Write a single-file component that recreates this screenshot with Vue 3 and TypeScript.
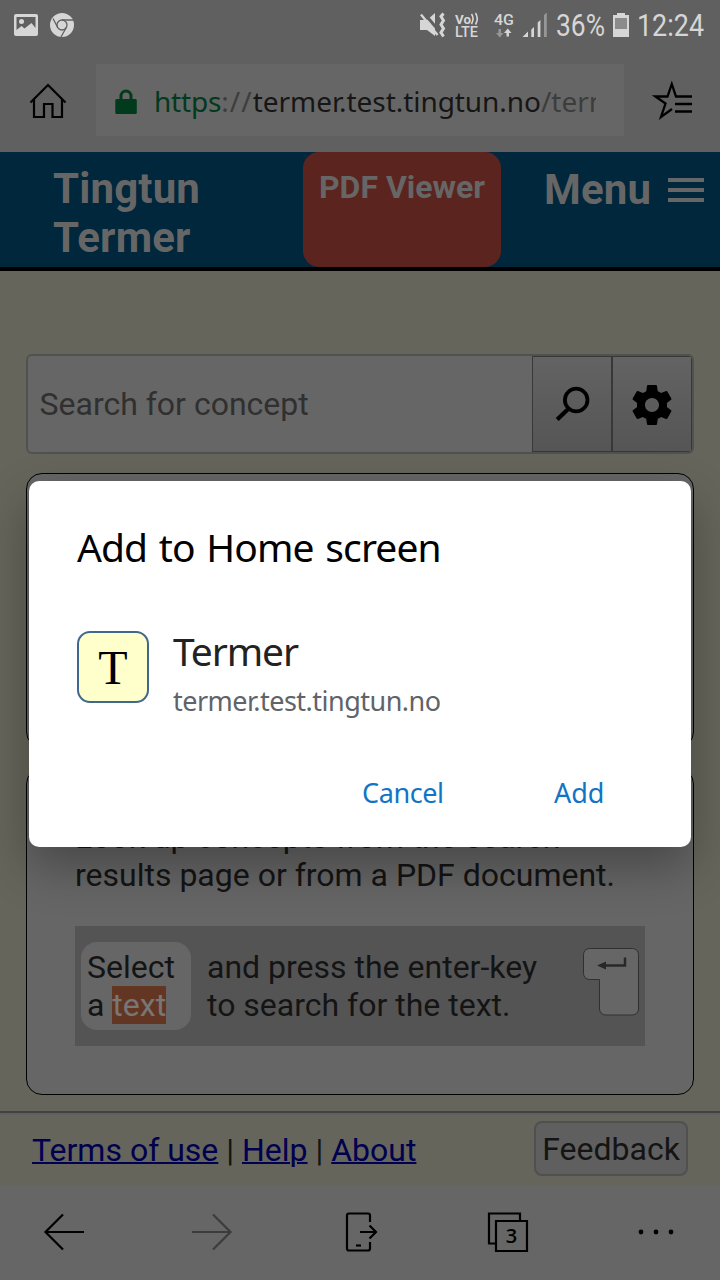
<script setup lang="ts">
const links: string[] = ['Terms of use', 'Help', 'About']
</script>

<template>
  <div class="screen">
    <div class="status">
      <svg width="320" height="50" viewBox="0 0 320 50" class="notif">
        <path fill="#d6d6d6" fill-rule="evenodd" d="M16 14h20a2 2 0 0 1 2 2v18a2 2 0 0 1-2 2H16a2 2 0 0 1-2-2V16a2 2 0 0 1 2-2zM16.500 17v13l5-4 3 2.500 7-5.500 4 5V17z" />
        <circle cx="21.500" cy="21.500" r="2.500" fill="#d6d6d6" />
        <circle cx="62" cy="25" r="12" fill="#d6d6d6" />
        <g fill="none" stroke="#606060" stroke-width="1.300">
          <circle cx="62" cy="25" r="5" />
          <path d="M62 20h11M57.700 27.500L53 18.500M66.300 27.500L61 37" />
        </g>
      </svg>
      <svg width="320" height="50" viewBox="400 0 320 50">
        <path fill="#d6d6d6" d="M420 20h7l8-7v23l-8-6h-7z" />
        <path stroke="#606060" stroke-width="3" d="M423 12l17 20" />
        <path stroke="#d6d6d6" stroke-width="2.400" d="M421 14.500l16.500 20.500" />
        <path fill="none" stroke="#d6d6d6" stroke-width="3" d="M443.500 13.500l-2.500 3 2.500 4-2.500 4 2.500 4-2.500 4 2.500 4" />
        <g fill="#d6d6d6" font-family="Roboto, sans-serif" font-weight="500">
          <text x="455" y="23.500" font-size="13" font-weight="700" textLength="16" lengthAdjust="spacingAndGlyphs">Vo</text>
          <text x="455" y="37" font-size="14" textLength="23" lengthAdjust="spacingAndGlyphs">LTE</text>
          <text x="494" y="25" font-size="15" textLength="20" lengthAdjust="spacingAndGlyphs">4G</text>
        </g>
        <path fill="none" stroke="#d6d6d6" stroke-width="1.600" d="M471.500 14q3 4.500 0 10M475.500 13q3.500 5.500 0 11.500" />
        <path fill="#969696" d="M498.500 29h2.500v4h2.500l-3.700 4.500-3.800-4.500h2.500z" />
        <path fill="#d6d6d6" d="M506.500 36.500h2.500V33h2.500l-3.700-4.500-3.800 4.500h2.500z" />
        <path fill="#d6d6d6" d="M522.500 37l5.500-5.500V37zM531.300 29.500l2.700-2.500v10h-2.700zM537.700 22.500l2.700-2.500v17h-2.700z" />
        <path fill="#969696" d="M544 15l2.800-2.500V37H544z" />
        <g fill="#d6d6d6" font-family="Roboto, sans-serif" font-size="31">
          <text x="556" y="36" textLength="49" lengthAdjust="spacingAndGlyphs">36%</text>
          <text x="637" y="36" textLength="67" lengthAdjust="spacingAndGlyphs">12:24</text>
        </g>
        <path fill="#d6d6d6" d="M617 13h8v2h4v22h-16V15h4z" />
        <path fill="#8b8b8b" d="M615 18h12v11h-12z" />
      </svg>
    </div>

    <div class="toolbar">
      <svg class="home" width="40" height="40" viewBox="28 81 40 40" fill="none" stroke="#000" stroke-width="2.200">
        <path d="M30.500 102.500L48 85l17.500 17.500M34 99.500V117h10v-13h8.500v13H62V99.500" />
      </svg>
      <div class="url">
        <svg width="22" height="26" viewBox="0 0 22 26">
          <path d="M6 11V7a5 5 0 0 1 10 0v4" fill="none" stroke="#023a1e" stroke-width="3" />
          <rect x="0.300" y="10" width="21.500" height="15" rx="1.500" fill="#023a1e" />
        </svg>
        <div class="address"><span class="secure">https</span><span class="dim sep">://</span>termer.test.tingtun.no<span class="dim">/term</span></div>
      </div>
      <svg class="fav" width="42" height="42" viewBox="652 80 42 42" fill="none" stroke="#000" stroke-width="2.300">
        <path d="M692 96.500H676L671.800 84L667.500 96.500H655.500L665.500 103.500L661 117L672 109M675 104h17M675 111.500h17" />
      </svg>
    </div>

    <header class="head">
      <div class="brand">Tingtun<br />Termer</div>
      <div class="pdf">PDF Viewer</div>
      <div class="menu">
        <span>Menu</span>
        <svg width="36" height="24" viewBox="0 0 36 24"><path fill="#666" d="M0 0h36v4H0zM0 10h36v4H0zM0 20h36v4H0z" /></svg>
      </div>
    </header>

    <main class="content">
      <div class="search">
        <div class="field">Search for concept</div>
        <div class="btn">
          <svg width="40" height="40" viewBox="0.800 -1 40 40" fill="none" stroke="#000">
            <circle cx="25" cy="15" r="11.300" stroke-width="3.800" />
            <path d="M16.500 24.500L6 34.500" stroke-width="4.300" />
          </svg>
        </div>
        <div class="btn">
          <svg width="48" height="48" viewBox="0 -0.500 24 24">
            <path d="M19.430 12.980c.04-.32.07-.64.07-.98s-.03-.66-.07-.98l2.110-1.650c.19-.15.24-.42.12-.64l-2-3.460c-.12-.22-.39-.3-.61-.22l-2.490 1c-.52-.4-1.080-.73-1.690-.98l-.38-2.650C14.460 2.180 14.250 2 14 2h-4c-.25 0-.46.18-.49.42l-.38 2.650c-.61.25-1.170.59-1.690.98l-2.490-1c-.23-.09-.49 0-.61.22l-2 3.460c-.13.22-.07.49.12.64l2.110 1.650c-.04.32-.07.65-.07.98s.03.66.07.98l-2.110 1.650c-.19.15-.24.42-.12.64l2 3.460c.12.22.39.3.61.22l2.490-1c.52.4 1.080.73 1.690.98l.38 2.650c.03.24.24.42.49.42h4c.25 0 .46-.18.49-.42l.38-2.650c.61-.25 1.170-.59 1.690-.98l2.490 1c.23.09.49 0 .61-.22l2-3.460c.12-.22.07-.49-.12-.64l-2.110-1.650zM12 15.500c-1.930 0-3.500-1.570-3.500-3.500s1.570-3.500 3.500-3.500 3.500 1.570 3.500 3.500-1.570 3.500-3.500 3.500z" />
          </svg>
        </div>
      </div>
      <section class="card first"></section>
      <section class="card second">
        <p>Look up concepts from the search<br />results page or from a PDF document.</p>
        <div class="hint">
          <div class="select">Select<br />a <mark>text</mark></div>
          <div class="press">and press the enter-key<br />to search for the text.</div>
          <svg width="58" height="70" viewBox="-0.500 0 58 70">
            <path d="M7 1.500H50a6 6 0 0 1 6 6V62a6 6 0 0 1-6 6H23a6 6 0 0 1-6-6V32.500H7a6 6 0 0 1-6-6V7.500a6 6 0 0 1 6-6z" fill="#666" stroke="#303030" />
            <path d="M42.500 10.500v8H21" fill="none" stroke="#28282c" stroke-width="2.500" />
            <path d="M14.500 18.500l9-4v8z" fill="#28282c" />
          </svg>
        </div>
      </section>
    </main>

    <footer class="foot">
      <nav>
        <template v-for="(link, i) in links" :key="link"><template v-if="i"> | </template><a>{{ link }}</a></template>
      </nav>
      <div class="feedback">Feedback</div>
    </footer>

    <div class="bottom">
      <svg width="720" height="94" viewBox="0 1186 720 94" fill="none" stroke="#000" stroke-width="2.200">
        <path d="M84 1232H46M63 1214.500L45.500 1232L63 1249.500" />
        <path stroke="#3c3c3c" d="M192 1232h38M213 1214.500L230.500 1232L213 1249.500" />
        <path d="M370 1222v-6.500q0-2-2-2h-19q-2 0-2 2v33q0 2 2 2h19q2 0 2-2v-6.500M360 1232h16M369.500 1225.500L376 1232L369.500 1238.500" />
        <path d="M356 1245.500h5" />
        <path d="M496 1243.500h-7v-30h31v7M496 1221h31v30h-31z" />
        <g fill="#000" stroke="none">
          <circle cx="641" cy="1232" r="2.400" /><circle cx="656" cy="1232" r="2.400" /><circle cx="671" cy="1232" r="2.400" />
          <text x="511.500" y="1243" text-anchor="middle" font-size="20" font-weight="600" font-family="Open Sans, sans-serif">3</text>
        </g>
      </svg>
    </div>

    <div class="dialog">
      <h1>Add to Home screen</h1>
      <div class="app">
        <div class="icon">T</div>
        <div class="info">
          <div class="name">Termer</div>
          <div class="host">termer.test.tingtun.no</div>
        </div>
      </div>
      <div class="actions"><span class="cancel">Cancel</span><span class="add">Add</span></div>
    </div>
  </div>
</template>

<style>
body { margin: 0; }
</style>

<style scoped>
* { box-sizing: border-box; }
svg { display: block; flex: none; }
.screen {
  position: relative; width: 720px; height: 1280px; overflow: hidden;
  display: flex; flex-direction: column;
  background: #65655b; color: #141414;
  font-family: Roboto, sans-serif; font-size: 32px; line-height: 38px; white-space: nowrap;
}
.status { height: 50px; display: flex; justify-content: space-between; background: #606060; }
.toolbar { height: 102px; display: flex; align-items: flex-start; padding: 14px 26px 0 28px; background: #606060; }
.home { margin-top: 17px; }
.fav { margin: 16px 0 0 28px; }
.url {
  width: 528px; height: 72px; margin-left: 28px; padding: 0 28px 0 19px;
  display: flex; align-items: center; background: #666;
}
.url svg { margin-top: 3px; }
.address { margin: 2px 0 0 17px; flex: 1; overflow: hidden; font-family: "Noto Sans", "Open Sans", sans-serif; font-size: 28px; letter-spacing: -.05px; color: #161616; }
.secure { color: #023a1e; letter-spacing: -.2px; }
.dim { color: #3d3d3d; }
.sep { letter-spacing: 1.1px; }
.head { height: 119px; display: flex; background: #00273b; border-bottom: 4px solid #000; color: #666; font-weight: 700; }
.brand { width: 303px; padding: 12px 0 0 53px; font-size: 42px; line-height: 49px; letter-spacing: .15px; }
.pdf { width: 198px; height: 115px; padding-top: 16px; border-radius: 16px; background: #5c241f; text-align: center; }
.menu { display: flex; padding: 13px 0 0 43px; font-size: 42px; line-height: 49px; letter-spacing: .15px; }
.menu svg { margin: 13px 0 0 16.5px; }
.content { height: 840px; padding: 83px 26px 0; }
.search {
  height: 100px; display: flex; border: 2px solid #50524e; border-radius: 6px; background: #666; overflow: hidden;
}
.field { flex: 1; padding: 29px 0 0 11.5px; color: #303030; }
.btn {
  width: 80px; display: flex; align-items: center; justify-content: center;
  border: 1px solid #383838; background: linear-gradient(#636363, #555);
}
.card { background: #666; border: 1px solid #000; border-radius: 16px; }
.first { height: 275px; margin-top: 19px; }
.second { height: 327px; margin-top: 20px; padding: 49px 48px 0; }
.second p { margin: 0; }
.hint { height: 120px; margin-top: 32px; padding: 16px 5px 16px 6px; display: flex; background: #545454; }
.select { width: 110px; height: 88px; padding: 6px 0 0 6px; border-radius: 16px; background: #666; }
mark { display: inline-block; height: 38px; background: #633623; color: #777; }
.press { width: 375px; padding: 6px 0 0 16px; }
.hint svg { margin: 5px 0 0 16px; }
.foot { height: 75px; display: flex; justify-content: space-between; align-items: flex-start; padding: 8px 32px 0; border-top: 2px solid #414141; box-shadow: inset 0 2px #606060; }
.foot nav { margin-top: 10px; }
.foot a { color: #00004e; text-decoration: underline; text-decoration-thickness: 2px; }
.feedback { width: 154px; height: 55px; border: 2px solid #505050; border-radius: 8px; background: #5f5f5f; text-align: center; line-height: 52px; }
.bottom { height: 94px; background: #666; }
.dialog {
  position: absolute; left: 29px; top: 481px; width: 662px; height: 366px; padding: 38px 48px 0;
  border-radius: 10px; background: #fff; box-shadow: 0 20px 48px rgba(0, 0, 0, .3);
  font-family: "Noto Sans", "Open Sans", sans-serif;
}
h1 { margin: 0; font-weight: 400; font-size: 39px; line-height: 56px; letter-spacing: -.9px; word-spacing: 2.4px; color: #000; }
.app { display: flex; margin-top: 56px; }
.icon {
  width: 72px; height: 72px; border: 2px solid #40688f; border-radius: 13px; background: #ffffcb;
  font-family: "Liberation Serif", serif; font-size: 48px; line-height: 70px; text-align: center; color: #000;
}
.info { margin-left: 24px; }
.name { margin-top: -8px; font-size: 39px; line-height: 56px; letter-spacing: -1.1px; color: #222; }
.host { margin-top: 2px; font-size: 27px; line-height: 40px; letter-spacing: -.52px; color: #606468; }
.actions { display: flex; margin-top: 52px; font-size: 27px; line-height: 40px; letter-spacing: -.4px; color: #0f75c6; }
.cancel { width: 192px; margin-left: 285px; }
.add { letter-spacing: 0; }
</style>
